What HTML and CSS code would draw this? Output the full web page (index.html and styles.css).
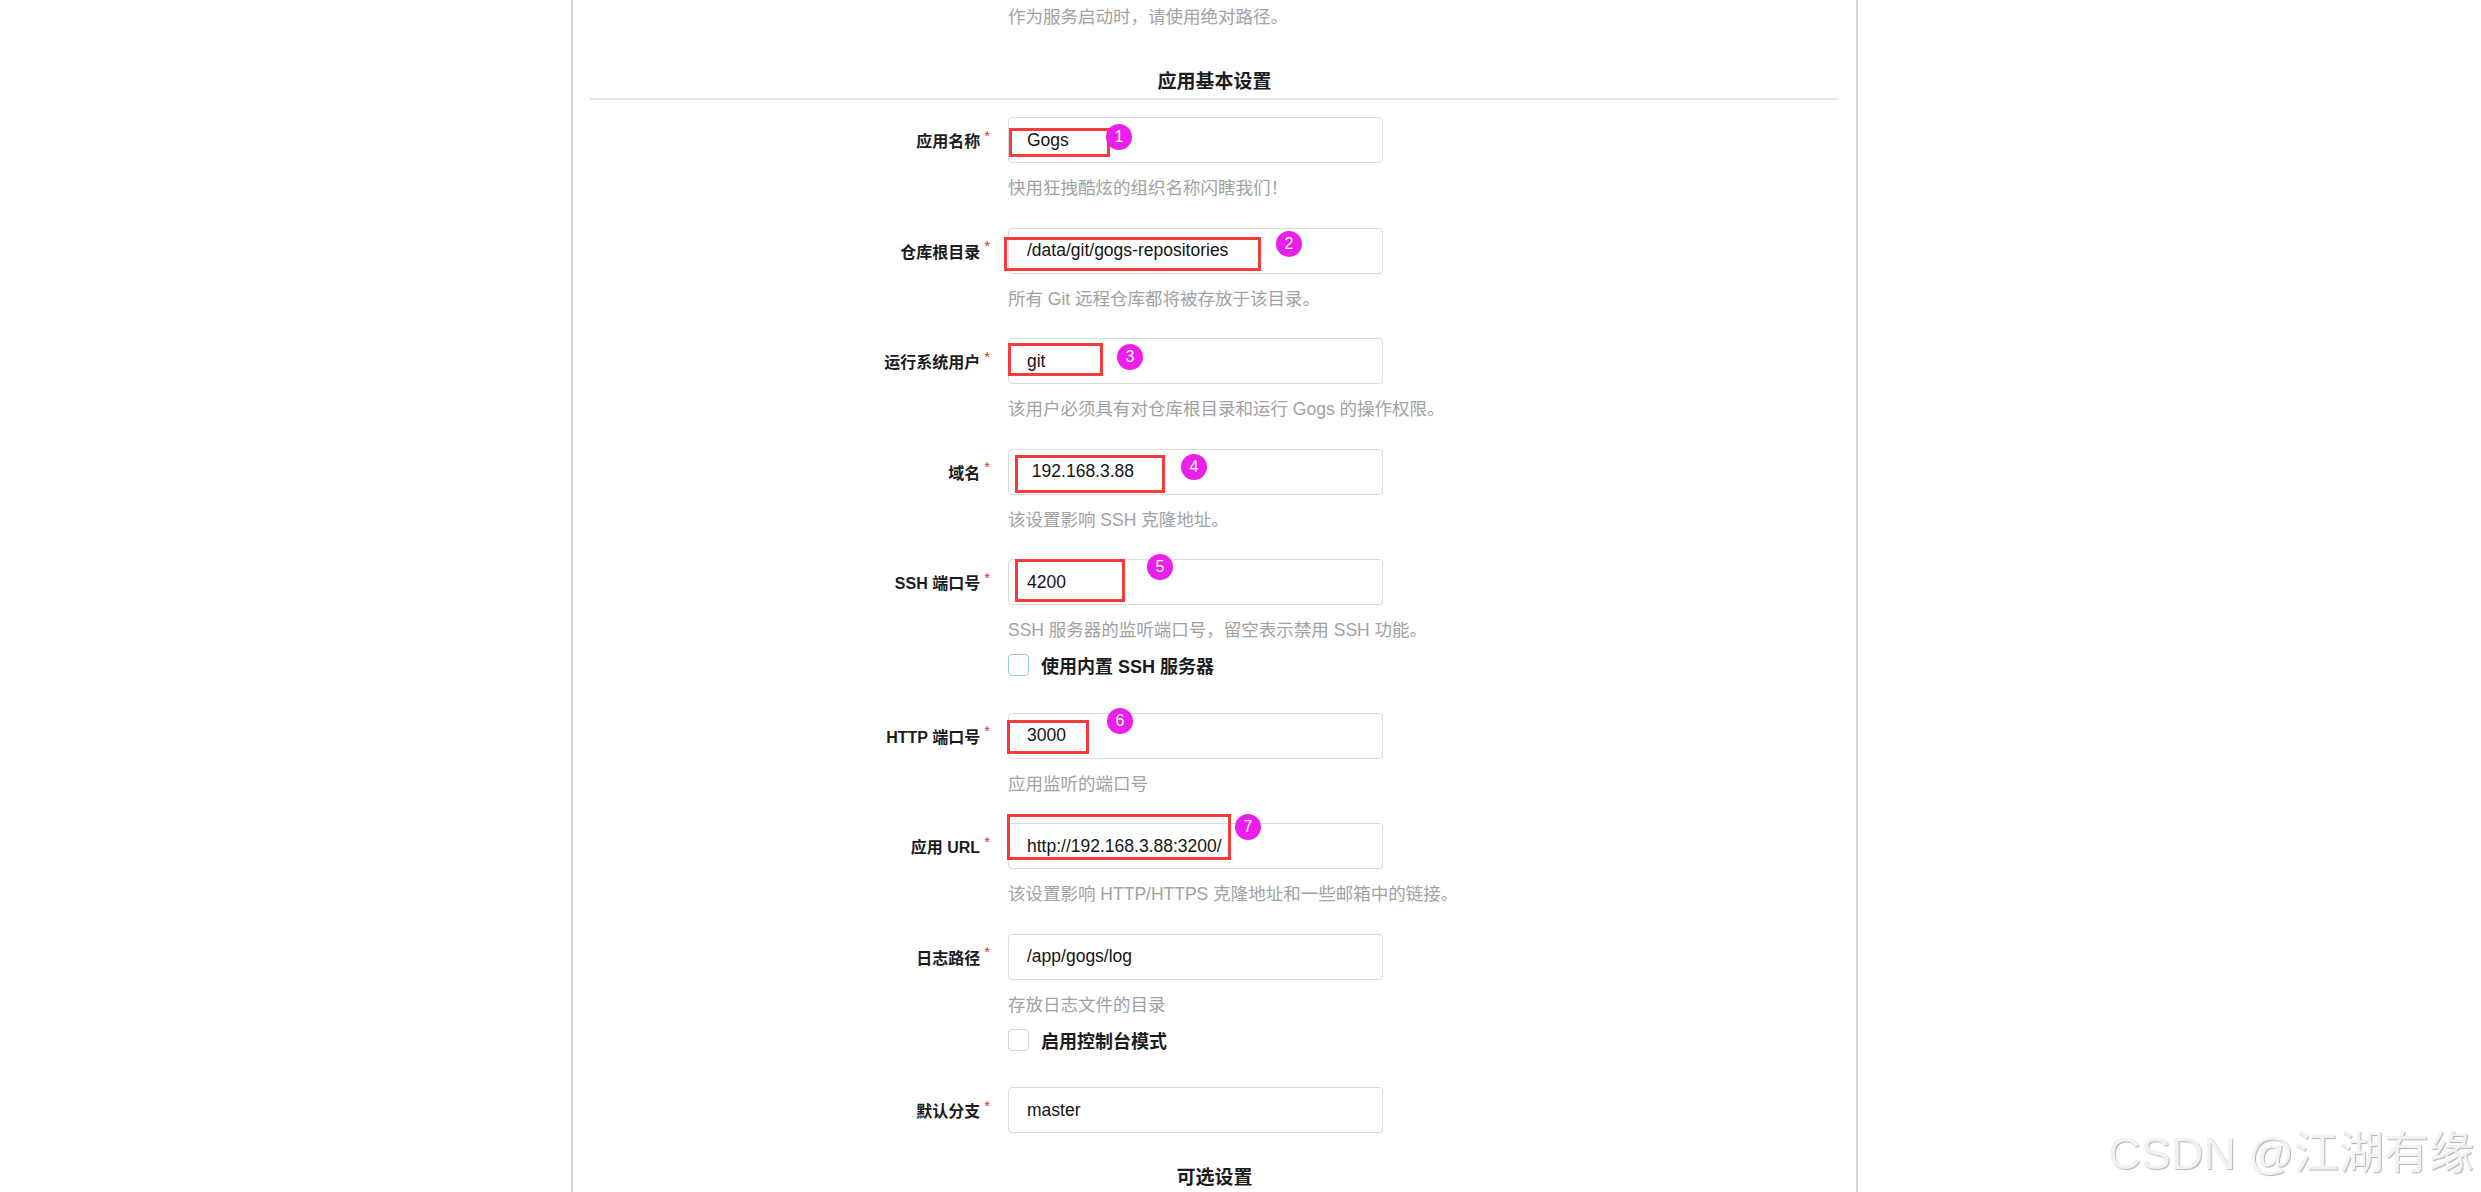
FILE: index.html
```html
<!DOCTYPE html>
<html lang="zh-CN">

<head>
  <meta charset="UTF-8">
  <meta http-equiv="X-UA-Compatible" content="ie=edge">
  <title>安装页面 - Gogs</title>
  <link rel="stylesheet" href="styles.css">
</head>

<body>
  <div class="install">
    <p class="help top-help">作为服务启动时，请使用绝对路径。</p>

    <h4 class="dividing-header">应用基本设置</h4>

    <div class="field">
      <label class="required">应用名称</label>
      <div class="control">
        <input type="text" value="Gogs" readonly="readonly" />
        <span class="mark mark-1"></span>
        <span class="badge badge-1">1</span>
      </div>
      <p class="help">快用狂拽酷炫的组织名称闪瞎我们！</p>
    </div>

    <div class="field">
      <label class="required">仓库根目录</label>
      <div class="control">
        <input type="text" value="/data/git/gogs-repositories" readonly="readonly" />
        <span class="mark mark-2"></span>
        <span class="badge badge-2">2</span>
      </div>
      <p class="help">所有 Git 远程仓库都将被存放于该目录。</p>
    </div>

    <div class="field">
      <label class="required">运行系统用户</label>
      <div class="control">
        <input type="text" value="git" readonly="readonly" />
        <span class="mark mark-3"></span>
        <span class="badge badge-3">3</span>
      </div>
      <p class="help">该用户必须具有对仓库根目录和运行 Gogs 的操作权限。</p>
    </div>

    <div class="field">
      <label class="required">域名</label>
      <div class="control">
        <input type="text" value=" 192.168.3.88" readonly="readonly" />
        <span class="mark mark-4"></span>
        <span class="badge badge-4">4</span>
      </div>
      <p class="help">该设置影响 SSH 克隆地址。</p>
    </div>

    <div class="field">
      <label class="required">SSH 端口号</label>
      <div class="control">
        <input type="text" value="4200" readonly="readonly" />
        <span class="mark mark-5"></span>
        <span class="badge badge-5">5</span>
      </div>
      <p class="help">SSH 服务器的监听端口号，留空表示禁用 SSH 功能。</p>
      <div class="checkbox">
        <span class="box box-focus"></span>
        <span class="checkbox-text">使用内置 SSH 服务器</span>
      </div>
    </div>

    <div class="field">
      <label class="required">HTTP 端口号</label>
      <div class="control">
        <input type="text" value="3000" readonly="readonly" />
        <span class="mark mark-6"></span>
        <span class="badge badge-6">6</span>
      </div>
      <p class="help">应用监听的端口号</p>
    </div>

    <div class="field">
      <label class="required">应用 URL</label>
      <div class="control">
        <input type="text" value="http://192.168.3.88:3200/" readonly="readonly" />
        <span class="mark mark-7"></span>
        <span class="badge badge-7">7</span>
      </div>
      <p class="help">该设置影响 HTTP/HTTPS 克隆地址和一些邮箱中的链接。</p>
    </div>

    <div class="field">
      <label class="required">日志路径</label>
      <div class="control">
        <input type="text" value="/app/gogs/log" readonly="readonly" />
      </div>
      <p class="help">存放日志文件的目录</p>
      <div class="checkbox">
        <span class="box"></span>
        <span class="checkbox-text">启用控制台模式</span>
      </div>
    </div>

    <div class="field">
      <label class="required">默认分支</label>
      <div class="control">
        <input type="text" value="master" readonly="readonly" />
      </div>
    </div>

    <h4 class="dividing-header optional">可选设置</h4>
  </div>

  <div class="watermark">CSDN @江湖有缘</div>
</body>

</html>
```

FILE: styles.css
```css
html,
body,
p,
h4,
input {
  margin: 0;
  padding: 0;
}

html,
body {
  height: 100%;
  overflow: hidden;
  background: #fff;
}

body {
  font-family: "Liberation Sans", "Noto Sans CJK SC", sans-serif;
  color: #1b1c1d;
}

.install {
  box-sizing: border-box;
  width: 1287px;
  min-height: 1400px;
  margin-left: 571px;
  padding: 5px 17px 0;
  border-left: 2px solid #d4d4d5;
  border-right: 2px solid #d4d4d5;
}

.help {
  font-size: 17.5px;
  line-height: 24px;
  color: #a2a2a2;
  white-space: nowrap;
}

.top-help {
  margin-left: 418px;
}

.dividing-header {
  margin-top: 41px;
  padding-bottom: 4px;
  border-bottom: 2px solid #e4e4e5;
  font-size: 19px;
  line-height: 24px;
  font-weight: 700;
  text-align: center;
  color: #1b1c1d;
}

.dividing-header.optional {
  margin-top: 33px;
  border-bottom: 0;
}

/* 每一行：左边 label，右边输入框 */
.field {
  display: grid;
  grid-template-columns: 400px 1fr;
  column-gap: 18px;
  margin-top: 27.5px;
}

.dividing-header + .field {
  margin-top: 17px;
}

.field label {
  display: flex;
  align-items: center;
  justify-content: flex-end;
  height: 46px;
  font-size: 16px;
  font-weight: 700;
  color: #1b1c1d;
}

.field label.required::after {
  content: "*";
  position: relative;
  top: -5px;
  margin-left: 4px;
  font-size: 15px;
  font-weight: 400;
  color: #e03030;
}

.field .help,
.field .checkbox {
  grid-column: 2;
}

.field .help {
  margin-top: 13px;
}

.control {
  position: relative;
  width: 375px;
  height: 46px;
}

.control input {
  box-sizing: border-box;
  width: 375px;
  height: 46px;
  padding: 0 18px;
  border: 1px solid #dcdcdd;
  border-radius: 4px;
  outline: none;
  background: #fff;
  font: 17.5px "Liberation Sans", "Noto Sans CJK SC", sans-serif;
  color: #141414;
}

.checkbox {
  display: flex;
  align-items: center;
  height: 30px;
  margin: 8px 0 5px;
}

.checkbox .box {
  box-sizing: border-box;
  width: 21px;
  height: 22px;
  border: 1px solid #d4d4d5;
  border-radius: 4px;
  background: #fff;
}

.checkbox .box-focus {
  border-color: #96c8da;
}

.checkbox-text {
  margin-left: 12px;
  font-size: 18px;
  font-weight: 700;
  color: #1b1c1d;
}

/* 截图上的红框和序号 */
.mark {
  position: absolute;
  box-sizing: border-box;
  border: 3px solid #f63b3b;
}

.badge {
  position: absolute;
  width: 26px;
  height: 26px;
  border-radius: 50%;
  background: #ea1fea;
  color: #fff;
  font: 16px/26px "Liberation Sans", sans-serif;
  text-align: center;
}

.mark-1 { left: 1px; top: 11px; width: 101px; height: 29px; }
.badge-1 { left: 98px; top: 7px; }

.mark-2 { left: -4px; top: 9px; width: 257px; height: 34px; }
.badge-2 { left: 268px; top: 3px; }

.mark-3 { left: 0; top: 5px; width: 95px; height: 33px; }
.badge-3 { left: 109px; top: 6px; }

.mark-4 { left: 7px; top: 6px; width: 150px; height: 38px; }
.badge-4 { left: 173px; top: 5px; }

.mark-5 { left: 7px; top: 0; width: 110px; height: 43px; }
.badge-5 { left: 139px; top: -5px; }

.mark-6 { left: -1px; top: 7px; width: 82px; height: 34px; }
.badge-6 { left: 99px; top: -5px; }

.mark-7 { left: -1px; top: -9px; width: 224px; height: 46px; }
.badge-7 { left: 227px; top: -9px; }

.watermark {
  position: fixed;
  right: 7px;
  bottom: 16px;
  font: 45px/45px "Liberation Sans", "Noto Sans CJK SC", sans-serif;
  color: #f2f2f2;
  text-shadow: 1px 1px 1px #b3b3b3, -1px -1px 0 #fff;
  white-space: nowrap;
}
```
